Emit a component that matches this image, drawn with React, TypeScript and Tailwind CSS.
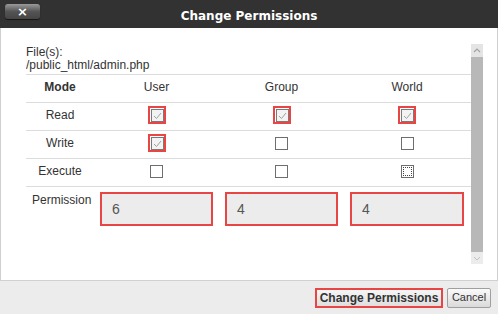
const RED = 'border-[#e84545]';

const CheckMark = () => (
  <svg width="11" height="11" viewBox="0 0 11 11" className="absolute left-0 top-0">
    <polyline points="2,6 4.5,8.5 9,3" fill="none" stroke="#a0a0a0" strokeWidth="1" />
  </svg>
);

interface BoxProps {
  checked?: boolean;
  highlighted?: boolean;
  focused?: boolean;
}

const Box = ({ checked, highlighted, focused }: BoxProps) => {
  const inner = (
    <span
      className={`relative block w-[13px] h-[13px] border ${
        checked ? 'border-[#7a7a7a] bg-[#f3f3f3]' : 'border-[#6e6e6e] bg-white'
      }`}
    >
      {checked && <CheckMark />}
      {focused && (
        <span className="absolute inset-[1px] border border-dotted border-[#444]" />
      )}
    </span>
  );

  if (!highlighted) return inner;

  return (
    <span className={`block w-[18px] h-[18px] border-2 ${RED} pl-[1px] pt-[1px]`}>
      {inner}
    </span>
  );
};

const rows = [
  { label: 'Read', user: true, group: true, world: true },
  { label: 'Write', user: true, group: false, world: false },
  { label: 'Execute', user: false, group: false, world: false },
];

const App = () => {
  return (
    <div
      className="w-[498px] h-[314px] flex flex-col bg-white text-[#333] text-[12px] overflow-hidden"
      style={{ fontFamily: '"Liberation Sans", Arial, sans-serif' }}
    >
      {/* Title bar */}
      <div className="relative h-[28px] shrink-0 bg-[#323232] flex items-center justify-center pt-[4px]">
        <div className="absolute left-[5px] top-[4px] w-[35px] h-[15px] rounded-[3px] bg-gradient-to-b from-[#9b9b9b] via-[#555] to-[#474343] shadow-[0_1px_1px_rgba(0,0,0,0.6)] flex items-center justify-center">
          <span
            className="text-white font-bold text-[13px] leading-none"
            style={{ fontFamily: '"DejaVu Sans", sans-serif' }}
          >
            ×
          </span>
        </div>
        <span
          className="text-white font-bold text-[12px]"
          style={{ fontFamily: '"DejaVu Sans", sans-serif' }}
        >
          Change Permissions
        </span>
      </div>

      {/* Body */}
      <div className="h-[252px] shrink-0 border-x border-[#cfcfcf] pl-[25px] pr-[14px] py-[16px] flex">
        <div className="flex-1 overflow-hidden">
          <div className="pt-[2px] pb-[2px] leading-[13px] border-b border-[#dcdcdc]">
            <div>File(s):</div>
            <div>/public_html/admin.php</div>
          </div>

          <div className="grid grid-cols-[68px_125px_125px_126px] h-[28px] pb-[3px] items-center border-b border-[#dcdcdc] text-center">
            <span className="font-bold">Mode</span>
            <span>User</span>
            <span>Group</span>
            <span>World</span>
          </div>

          {rows.map((r, i) => (
            <div
              key={r.label}
              className="grid grid-cols-[68px_125px_125px_126px] h-[28px] pb-[3px] items-center border-b border-[#dcdcdc] text-center"
            >
              <span>{r.label}</span>
              <span className="flex justify-center">
                <Box checked={r.user} highlighted={r.user} />
              </span>
              <span className="flex justify-center">
                <Box checked={r.group} highlighted={r.group} />
              </span>
              <span className="flex justify-center">
                <Box checked={r.world} highlighted={r.world} focused={i === 2} />
              </span>
            </div>
          ))}

          <div className="grid grid-cols-[68px_125px_125px_126px] pt-[5px]">
            <span className="pl-[6px] pt-[1px] leading-[14px]">Permission</span>
            {['6', '4', '4'].map((v, i) => (
              <div key={i} className="px-[6px]">
                <div
                  className={`h-[34px] border-2 ${RED} bg-[#ececec] flex items-center pl-[10px] text-[14px] text-[#555]`}
                >
                  {v}
                </div>
              </div>
            ))}
          </div>
        </div>

        {/* Scrollbar */}
        <div className="w-[12px] shrink-0 flex flex-col">
          <div className="h-[13px] bg-[#e4e4e4] flex items-center justify-center">
            <svg width="8" height="5" viewBox="0 0 8 5">
              <polyline points="1,4 4,1 7,4" fill="none" stroke="#a3a3a3" strokeWidth="1.2" />
            </svg>
          </div>
          <div className="flex-1 bg-[#b8b8b8]" />
          <div className="h-[12px] bg-[#ececec] flex items-center justify-center">
            <svg width="8" height="5" viewBox="0 0 8 5">
              <polyline points="1,1 4,4 7,1" fill="none" stroke="#c2c2c2" strokeWidth="1" />
            </svg>
          </div>
        </div>
      </div>

      {/* Footer */}
      <div className="flex-1 bg-[#ececec] border-t border-[#d0d0d0] flex items-center justify-end gap-[4px] pr-[7px]">
        <button className={`w-[128px] h-[20px] border-2 ${RED} bg-gradient-to-b from-[#f6f6f6] to-[#dedede] font-bold text-[12px] leading-none text-[#333]`}>
          Change Permissions
        </button>
        <button className="w-[44px] h-[20px] border border-[#9f9f9f] rounded-[2px] bg-gradient-to-b from-[#fafafa] to-[#dadada] text-[11px] leading-none text-[#333]">
          Cancel
        </button>
      </div>
    </div>
  );
};

export default App;
